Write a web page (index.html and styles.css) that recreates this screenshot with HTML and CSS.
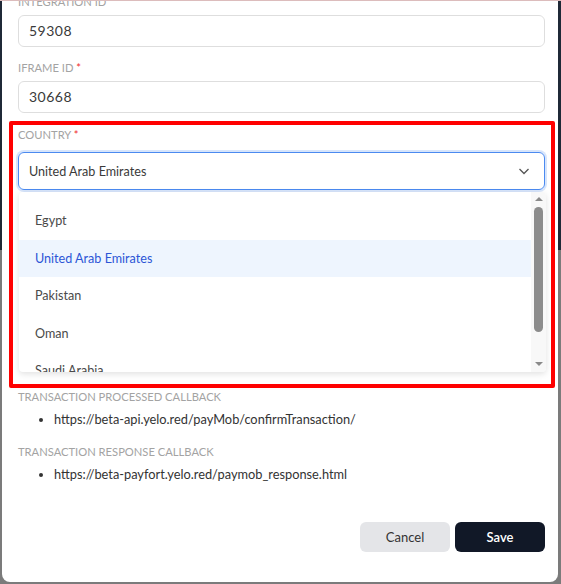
FILE: index.html
```html
<!DOCTYPE html>
<html lang="en">
<head>
    <meta charset="UTF-8">
    <meta name="viewport" content="width=device-width, initial-scale=1.0">
    <title>Paymob Settings</title>
    <link rel="stylesheet" href="styles.css">
</head>
<body>
    <div class="modal">
        <form class="form">
            <!-- Integration -->
            <div class="field">
                <label class="field-label">Integration ID</label>
                <div class="input">59308</div>
            </div>

            <div class="field">
                <label class="field-label">Iframe ID <span class="req">*</span></label>
                <div class="input">30668</div>
            </div>

            <!-- Country select, opened -->
            <div class="field country">
                <label class="field-label">Country <span class="req">*</span></label>
                <div class="select">
                    <span>United Arab Emirates</span>
                    <svg class="chevron" width="14" height="14" viewBox="0 0 14 14">
                        <path d="M2.5 5l4.5 4.5L11.5 5" fill="none" stroke="#555" stroke-width="1.3"/>
                    </svg>
                </div>

                <div class="dropdown">
                    <ul class="options">
                        <li>Egypt</li>
                        <li class="active">United Arab Emirates</li>
                        <li>Pakistan</li>
                        <li>Oman</li>
                        <li>Saudi Arabia</li>
                    </ul>
                    <div class="scrollbar">
                        <span class="arrow up"></span>
                        <span class="thumb"></span>
                        <span class="arrow down"></span>
                    </div>
                </div>
            </div>

            <div class="callback">
                <div class="field-label">Transaction processed callback</div>
                <ul class="urls">
                    <li>https://beta-api.yelo.red/payMob/confirmTransaction/</li>
                </ul>
            </div>

            <div class="callback">
                <div class="field-label">Transaction response callback</div>
                <ul class="urls">
                    <li>https://beta-payfort.yelo.red/paymob_response.html</li>
                </ul>
            </div>

            <div class="actions">
                <button type="button" class="btn btn-cancel">Cancel</button>
                <button type="button" class="btn btn-save">Save</button>
            </div>
        </form>

        <!-- highlight box -->
        <div class="highlight"></div>
    </div>
</body>
</html>
```

FILE: styles.css
```css
body {
    margin: 0;
    padding: 0;
    font-family: Lato, "Noto Sans", sans-serif;
    background: linear-gradient(#1f2937 0, #1f2937 250px, #7b7b7b 250px);
    border-top: 1px solid #dcbcbc;
    height: 583px;
    overflow: hidden;
}

.modal {
    position: relative;
    margin-left: 2px;
    width: 556px;
    height: 581px;
    background-color: white;
    border-radius: 0 0 8px 8px;
    overflow: hidden;
}

.form {
    margin-top: -6px;
    padding: 0 13px 0 16px;
}

/* Fields */
.field {
    margin-bottom: 14px;
}

.field-label {
    display: block;
    font-size: 11.2px;
    line-height: 14px;
    color: #a3a3a3;
    text-transform: uppercase;
    margin-bottom: 6px;
}

.req {
    color: #ef2b2b;
}

.input {
    height: 30px;
    line-height: 30px;
    border: 1px solid #dedede;
    border-radius: 6px;
    padding: 0 10px;
    font-size: 14px;
    letter-spacing: 0.5px;
    color: #3a3a3a;
}

/* Country */
.country {
    position: relative;
    margin-top: 15px;
    margin-bottom: 200px;
}

.country .field-label {
    margin-bottom: 10px;
}

.select {
    display: flex;
    justify-content: space-between;
    align-items: center;
    height: 36px;
    border: 1px solid #4b8af0;
    border-radius: 6px;
    box-shadow: 0 0 0 2px rgba(96, 150, 240, 0.25);
    padding: 0 13px 0 10px;
    font-size: 12.6px;
    color: #3a3a3a;
}

.dropdown {
    position: absolute;
    top: 64px;
    left: 1px;
    right: -1px;
    height: 180px;
    display: flex;
    background-color: white;
    border-radius: 4px;
    box-shadow: 0 2px 6px rgba(0, 0, 0, 0.12);
    overflow: hidden;
}

.options {
    flex: 1;
    list-style: none;
    margin: 0;
    padding: 10px 0 0;
    overflow: hidden;
}

.options li {
    height: 37.5px;
    line-height: 37.5px;
    padding-left: 16px;
    font-size: 12.6px;
    color: #4a4a4a;
}

.options li.active {
    background-color: #eef5fe;
    color: #2c55d6;
}

.scrollbar {
    width: 15px;
    background-color: #f8f8f8;
    display: flex;
    flex-direction: column;
    align-items: center;
}

.arrow {
    width: 0;
    height: 0;
    border-left: 4px solid transparent;
    border-right: 4px solid transparent;
}

.arrow.up {
    margin-top: 5px;
    border-bottom: 4px solid #8a8a8a;
}

.arrow.down {
    margin-top: auto;
    margin-bottom: 6px;
    border-top: 4px solid #8a8a8a;
}

.thumb {
    margin-top: 6px;
    width: 9px;
    height: 125px;
    background-color: #8c8c8c;
    border-radius: 5px;
}

/* Callbacks */
.callback .field-label {
    margin-bottom: 5px;
}

.urls {
    margin: 0 0 16px;
    padding-left: 36px;
}

.urls li {
    font-size: 12.8px;
    line-height: 20px;
    color: #333;
}

/* Footer */
.actions {
    display: flex;
    justify-content: flex-end;
    gap: 5px;
    margin-top: 38px;
}

.btn {
    width: 90px;
    height: 30px;
    border: none;
    border-radius: 6px;
    font-family: Lato, "Noto Sans", sans-serif;
    font-size: 13px;
    cursor: pointer;
}

.btn-cancel {
    background-color: #e4e5e8;
    color: #333;
}

.btn-save {
    background-color: #111827;
    color: white;
    font-weight: 600;
}

/* red annotation box */
.highlight {
    position: absolute;
    left: 7px;
    top: 120px;
    width: 538px;
    height: 259px;
    border: 4px solid #ff0000;
    border-radius: 2px;
    pointer-events: none;
}
```
